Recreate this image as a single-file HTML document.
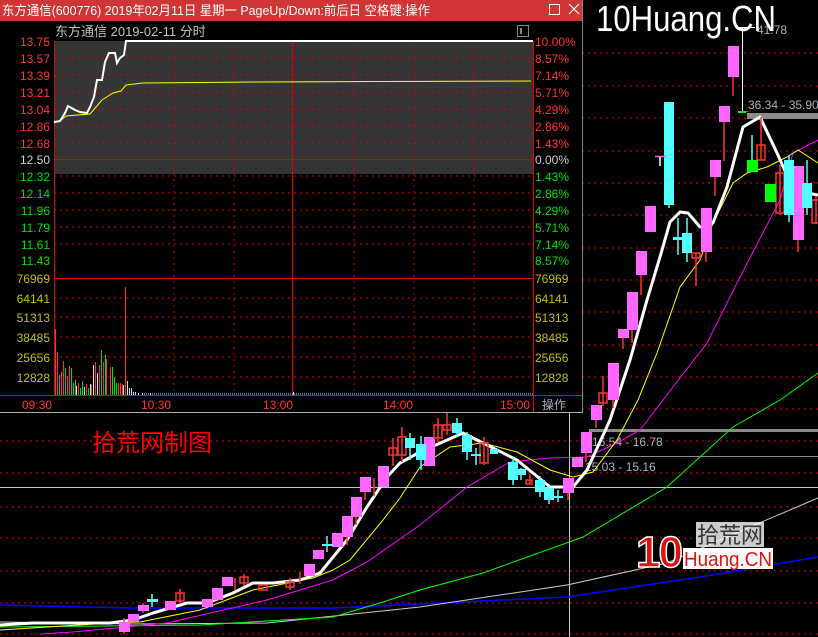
<!DOCTYPE html>
<html><head><meta charset="utf-8"><style>
html,body{margin:0;padding:0;background:#000;width:818px;height:637px;overflow:hidden}
svg{display:block}
text{font-family:"Liberation Sans","Noto Sans CJK SC",sans-serif}
</style></head><body>
<svg width="818" height="637" viewBox="0 0 818 637" xmlns="http://www.w3.org/2000/svg">
<rect width="818" height="637" fill="#000"/>
<g stroke="#e00000" stroke-width="1" stroke-dasharray="2,4">
<line x1="0" y1="53" x2="818" y2="53"/><line x1="0" y1="86" x2="818" y2="86"/><line x1="0" y1="118" x2="818" y2="118"/><line x1="0" y1="151" x2="818" y2="151"/><line x1="0" y1="183" x2="818" y2="183"/><line x1="0" y1="215" x2="818" y2="215"/><line x1="0" y1="248" x2="818" y2="248"/><line x1="0" y1="280" x2="818" y2="280"/><line x1="0" y1="312" x2="818" y2="312"/><line x1="0" y1="345" x2="818" y2="345"/><line x1="0" y1="377" x2="818" y2="377"/><line x1="0" y1="409" x2="818" y2="409"/><line x1="0" y1="441" x2="818" y2="441"/><line x1="0" y1="473" x2="818" y2="473"/><line x1="0" y1="507" x2="818" y2="507"/><line x1="0" y1="538" x2="818" y2="538"/><line x1="0" y1="571" x2="818" y2="571"/><line x1="0" y1="603" x2="818" y2="603"/><line x1="0" y1="634" x2="818" y2="634"/>
</g>
<line x1="0" y1="487.5" x2="818" y2="487.5" stroke="#c8c8c8"/>
<line x1="569.5" y1="413" x2="569.5" y2="637" stroke="#c8c8c8"/>
<rect x="747" y="113" width="71" height="6" fill="#8a8a8a"/>
<rect x="589" y="429" width="229" height="3" fill="#8a8a8a"/>
<line x1="589" y1="456.5" x2="818" y2="456.5" stroke="#8a8a8a"/>
<line x1="742.5" y1="27" x2="742.5" y2="111" stroke="#fff"/>
<line x1="738" y1="27.5" x2="755" y2="27.5" stroke="#fff"/>
<line x1="738" y1="111.5" x2="748" y2="111.5" stroke="#0c0"/>
<text x="757" y="34" font-size="12" fill="#a9b3c0">41.78</text>
<text x="748" y="109" font-size="12" fill="#a9b3c0">36.34 - 35.90</text>
<text x="592" y="446" font-size="12" fill="#a9b3c0">16.54 - 16.78</text>
<text x="585" y="471" font-size="12" fill="#a9b3c0">15.03 - 15.16</text>
<g fill="none">
<polyline stroke="#0000ff" stroke-width="1.5" points="0,605 83,607 133,608 333,608 420,604 567,597 700,577 818,557"/>
<polyline stroke="#cfcfcf" stroke-width="1" points="0,622 133,624 267,623 420,607 567,585 667,563 750,527 818,498"/>
<polyline stroke="#00ff00" stroke-width="1" points="0,627 200,625 333,617 383,602 420,590 483,573 583,537 667,487 733,427 780,400 818,373"/>
<polyline stroke="#ff00ff" stroke-width="1" points="40,634 73,632 167,623 267,600 333,580 367,562 420,525 467,487 510,462 550,458 587,457 617,443 640,430 663,400 707,343 740,277 780,200 793,153 818,140"/>
<polyline stroke="#ffff00" stroke-width="1" points="0,630 110,623 140,622 200,610 253,590 313,578 333,570 350,560 383,520 400,498 420,467 450,447 483,443 517,452 550,470 573,477 593,472 617,440 638,400 657,353 680,287 700,260 713,223 733,183 747,173 767,167 787,157 798,150 818,163"/>
<polyline stroke="#fff" stroke-width="3" stroke-linejoin="round" points="0,625 33,623 110,623 133,620 153,613 187,603 207,603 233,593 253,583 273,583 300,580 320,573 347,540 367,507 387,477 400,463 420,452 463,433 483,443 517,460 550,487 573,487 587,470 610,420 630,360 647,300 660,257 670,222 680,212 688,213 700,227 713,223 727,187 743,127 760,117 777,153 790,182 807,193 818,195"/>
</g>
<g stroke-width="1.5">
<g stroke="#ff3232"><line x1="124" y1="618" x2="124" y2="634"/><line x1="143" y1="603" x2="143" y2="613"/><line x1="347" y1="537" x2="347" y2="545"/><line x1="356" y1="517" x2="356" y2="525"/><line x1="365" y1="492" x2="365" y2="500"/><line x1="374" y1="478" x2="374" y2="496"/><line x1="393" y1="438" x2="393" y2="466"/><line x1="402" y1="427" x2="402" y2="462"/><line x1="438" y1="418" x2="438" y2="442"/><line x1="447" y1="413" x2="447" y2="435"/><line x1="484" y1="437" x2="484" y2="465"/><line x1="530" y1="474" x2="530" y2="484"/><line x1="568" y1="478" x2="568" y2="500"/><line x1="586" y1="453" x2="586" y2="462"/><line x1="596" y1="420" x2="596" y2="428"/><line x1="603" y1="376" x2="603" y2="406"/><line x1="613" y1="400" x2="613" y2="408"/><line x1="623" y1="338" x2="623" y2="349"/><line x1="632" y1="330" x2="632" y2="343"/><line x1="641" y1="275" x2="641" y2="295"/><line x1="696" y1="253" x2="696" y2="286"/><line x1="706" y1="252" x2="706" y2="262"/><line x1="715" y1="177" x2="715" y2="196"/><line x1="724" y1="122" x2="724" y2="161"/><line x1="733" y1="77" x2="733" y2="96"/><line x1="761" y1="117" x2="761" y2="160"/><line x1="780" y1="165" x2="780" y2="215"/><line x1="798" y1="240" x2="798" y2="252"/><line x1="816" y1="196" x2="816" y2="224"/><line x1="180" y1="589" x2="180" y2="604"/><line x1="244" y1="574" x2="244" y2="586"/><line x1="290" y1="578" x2="290" y2="590"/><line x1="300" y1="572" x2="300" y2="584"/><line x1="235" y1="578" x2="235" y2="590"/></g>
<g fill="#ff66ff"><rect x="119" y="622" width="11" height="10"/><rect x="128" y="614" width="11" height="8"/><rect x="138" y="605" width="11" height="6"/><rect x="165" y="601" width="11" height="9"/><rect x="202" y="599" width="11" height="8"/><rect x="212" y="588" width="11" height="12"/><rect x="222" y="577" width="11" height="9"/><rect x="304" y="564" width="11" height="12"/><rect x="313" y="550" width="11" height="9"/><rect x="332" y="533" width="11" height="14"/><rect x="342" y="516" width="11" height="21"/><rect x="351" y="497" width="11" height="20"/><rect x="360" y="477" width="11" height="15"/><rect x="378" y="466" width="11" height="21"/><rect x="424" y="437" width="11" height="29"/><rect x="563" y="478" width="11" height="15"/><rect x="572" y="457" width="11" height="10"/><rect x="581" y="432" width="11" height="21"/><rect x="591" y="405" width="11" height="15"/><rect x="608" y="363" width="11" height="37"/><rect x="618" y="329" width="11" height="9"/><rect x="627" y="292" width="11" height="38"/><rect x="636" y="251" width="11" height="24"/><rect x="645" y="206" width="11" height="26"/><rect x="701" y="208" width="11" height="44"/><rect x="710" y="160" width="11" height="17"/><rect x="719" y="106" width="11" height="16"/><rect x="728" y="46" width="11" height="31"/><rect x="793" y="166" width="11" height="74"/></g>
<g fill="none" stroke="#ff3232"><rect x="176" y="593" width="8" height="8"/><rect x="240" y="577" width="8" height="6"/><rect x="259" y="585" width="8" height="5"/><rect x="286" y="582" width="8" height="5"/><rect x="389" y="448" width="8" height="7"/><rect x="398" y="437" width="8" height="18"/><rect x="434" y="425" width="8" height="13"/><rect x="443" y="425" width="8" height="5"/><rect x="480" y="443" width="8" height="20"/><rect x="599" y="393" width="8" height="10"/><rect x="692" y="253" width="8" height="5"/><rect x="757" y="145" width="8" height="15"/><rect x="776" y="173" width="8" height="40"/><rect x="812" y="200" width="8" height="23"/><rect x="526" y="480" width="6" height="4"/></g>
<g stroke="#54ffff"><line x1="152" y1="594" x2="152" y2="607"/><line x1="327" y1="536" x2="327" y2="552"/><line x1="410" y1="433" x2="410" y2="460"/><line x1="421" y1="436" x2="421" y2="470"/><line x1="457" y1="418" x2="457" y2="437"/><line x1="467" y1="432" x2="467" y2="460"/><line x1="476" y1="448" x2="476" y2="465"/><line x1="513" y1="458" x2="513" y2="485"/><line x1="521" y1="468" x2="521" y2="480"/><line x1="540" y1="476" x2="540" y2="497"/><line x1="549" y1="486" x2="549" y2="504"/><line x1="558" y1="490" x2="558" y2="502"/><line x1="669" y1="102" x2="669" y2="208"/><line x1="678" y1="218" x2="678" y2="255"/><line x1="687" y1="218" x2="687" y2="262"/><line x1="752" y1="135" x2="752" y2="160"/><line x1="789" y1="155" x2="789" y2="222"/><line x1="807" y1="160" x2="807" y2="215"/></g>
<g fill="#54ffff"><rect x="147" y="599" width="11" height="3"/><rect x="322" y="544" width="11" height="2"/><rect x="405" y="438" width="10" height="10"/><rect x="416" y="444" width="10" height="16"/><rect x="452" y="423" width="10" height="10"/><rect x="462" y="435" width="10" height="17"/><rect x="471" y="454" width="10" height="2"/><rect x="490" y="449" width="8" height="5"/><rect x="508" y="462" width="10" height="18"/><rect x="516" y="469" width="10" height="6"/><rect x="535" y="480" width="10" height="12"/><rect x="544" y="488" width="10" height="12"/><rect x="553" y="496" width="10" height="2"/><rect x="664" y="102" width="10" height="103"/><rect x="673" y="237" width="10" height="3"/><rect x="682" y="233" width="10" height="20"/><rect x="784" y="160" width="10" height="55"/><rect x="802" y="183" width="10" height="25"/></g>
<g fill="#00ff00"><rect x="747" y="160" width="11" height="12"/><rect x="765" y="184" width="11" height="18"/><rect x="738" y="111" width="8" height="2"/></g>
<line x1="655" y1="156.5" x2="666" y2="156.5" stroke="#ff66ff"/><line x1="660" y1="157" x2="660" y2="166" stroke="#fff"/>
</g>
<text x="92" y="451" font-size="24" fill="#ff0000">拾荒网制图</text>
<text x="596" y="31" font-size="36" fill="#fff" textLength="180" lengthAdjust="spacingAndGlyphs">10Huang.CN</text>
<rect x="696" y="522" width="68" height="25" fill="#fff" opacity="0.8"/>
<rect x="683" y="548" width="90" height="21" fill="#fff"/>
<text x="636" y="567" font-size="44" font-weight="bold" fill="#e01010" stroke="#fff" stroke-width="1.5" letter-spacing="-2">10</text>
<text x="697" y="543" font-size="22" fill="#333">拾荒网</text>
<text x="684" y="566" font-size="20" fill="#e01010" textLength="88" lengthAdjust="spacingAndGlyphs">Huang.CN</text>
<rect x="0" y="0" width="583" height="413" fill="#000"/>
<rect x="0" y="0" width="583" height="21" fill="#d03535"/>
<text x="2" y="15" font-size="13" fill="#fff" textLength="428" lengthAdjust="spacingAndGlyphs">东方通信(600776) 2019年02月11日 星期一 PageUp/Down:前后日 空格键:操作</text>
<rect x="549.5" y="4.5" width="10" height="10" fill="none" stroke="#fff"/>
<path d="M569 4 L579 14 M579 4 L569 14" stroke="#fff" stroke-width="1.2"/>
<text x="55" y="36" font-size="13" fill="#c0c0c0">东方通信  2019-02-11 分时</text>
<rect x="517.5" y="25.5" width="11" height="11" fill="none" stroke="#888"/><rect x="520" y="28" width="2" height="6" fill="#888"/>
<line x1="582.5" y1="0" x2="582.5" y2="413" stroke="#888"/>
<line x1="0" y1="412.5" x2="583" y2="412.5" stroke="#aaa"/>
<rect x="54" y="41" width="479" height="133" fill="#353535"/>
<g stroke="#e00000" stroke-dasharray="2,4">
<line x1="54" y1="58" x2="533" y2="58"/><line x1="54" y1="75" x2="533" y2="75"/><line x1="54" y1="92" x2="533" y2="92"/><line x1="54" y1="109" x2="533" y2="109"/><line x1="54" y1="126" x2="533" y2="126"/><line x1="54" y1="143" x2="533" y2="143"/><line x1="54" y1="176" x2="533" y2="176"/><line x1="54" y1="193" x2="533" y2="193"/><line x1="54" y1="210" x2="533" y2="210"/><line x1="54" y1="227" x2="533" y2="227"/><line x1="54" y1="244" x2="533" y2="244"/><line x1="54" y1="298" x2="533" y2="298"/><line x1="54" y1="317" x2="533" y2="317"/><line x1="54" y1="337" x2="533" y2="337"/><line x1="54" y1="357" x2="533" y2="357"/><line x1="54" y1="377" x2="533" y2="377"/>
<line x1="174" y1="41" x2="174" y2="395"/><line x1="234" y1="41" x2="234" y2="395"/><line x1="354" y1="41" x2="354" y2="395"/><line x1="414" y1="41" x2="414" y2="395"/><line x1="474" y1="41" x2="474" y2="395"/>
</g>
<g stroke="#e00000" fill="none">
<line x1="54.5" y1="41" x2="54.5" y2="395"/><line x1="533.5" y1="41" x2="533.5" y2="412"/><line x1="292.5" y1="41" x2="292.5" y2="395"/>
<line x1="54" y1="159.5" x2="533" y2="159.5"/><line x1="54" y1="278.5" x2="533" y2="278.5"/><line x1="0" y1="395.5" x2="583" y2="395.5"/>
</g>
<polyline fill="none" stroke="#ffff00" stroke-width="1" points="54,123 60,121 66,116 90,114 102,100 113,93 121,91 126,85 143,83 256,82 531,81"/>
<polyline fill="none" stroke="#fff" stroke-width="2" points="54,122 60,121 65,113 68,106 75,110 80,112 87,113 90,107 94,97 97,80 102,80 105,62 109,53 115,53 117,63 120,58 124,55 126,41 533,41"/>
<g stroke-width="1">
<g stroke="#ff3232"><line x1="55.5" y1="329" x2="55.5" y2="395"/><line x1="57.5" y1="352" x2="57.5" y2="395"/><line x1="61.5" y1="372" x2="61.5" y2="395"/><line x1="63.5" y1="361" x2="63.5" y2="395"/><line x1="67.5" y1="376" x2="67.5" y2="395"/><line x1="69.5" y1="366" x2="69.5" y2="395"/><line x1="78.5" y1="383" x2="78.5" y2="395"/><line x1="86.5" y1="384" x2="86.5" y2="395"/><line x1="91.5" y1="385" x2="91.5" y2="395"/><line x1="95.5" y1="362" x2="95.5" y2="395"/><line x1="99.5" y1="365" x2="99.5" y2="395"/><line x1="103.5" y1="362" x2="103.5" y2="395"/><line x1="106.5" y1="359" x2="106.5" y2="395"/><line x1="110.5" y1="367" x2="110.5" y2="395"/><line x1="118.5" y1="383" x2="118.5" y2="395"/><line x1="120.5" y1="383" x2="120.5" y2="395"/><line x1="122.5" y1="384" x2="122.5" y2="395"/><line x1="125.5" y1="287" x2="125.5" y2="395"/></g>
<g stroke="#00e000"><line x1="59.5" y1="375" x2="59.5" y2="395"/><line x1="65.5" y1="368" x2="65.5" y2="395"/><line x1="71.5" y1="368" x2="71.5" y2="395"/><line x1="73.5" y1="383" x2="73.5" y2="395"/><line x1="75.5" y1="380" x2="75.5" y2="395"/><line x1="80.5" y1="388" x2="80.5" y2="395"/><line x1="82.5" y1="381" x2="82.5" y2="395"/><line x1="88.5" y1="388" x2="88.5" y2="395"/><line x1="101.5" y1="350" x2="101.5" y2="395"/><line x1="105.5" y1="355" x2="105.5" y2="395"/><line x1="112.5" y1="367" x2="112.5" y2="395"/><line x1="114.5" y1="377" x2="114.5" y2="395"/><line x1="116.5" y1="383" x2="116.5" y2="395"/></g>
<g stroke="#ddd"><line x1="76.5" y1="386" x2="76.5" y2="395"/><line x1="84.5" y1="387" x2="84.5" y2="395"/><line x1="90.5" y1="384" x2="90.5" y2="395"/><line x1="93.5" y1="365" x2="93.5" y2="395"/><line x1="97.5" y1="373" x2="97.5" y2="395"/><line x1="123.5" y1="385" x2="123.5" y2="395"/><line x1="127.5" y1="381" x2="127.5" y2="395"/><line x1="129.5" y1="388" x2="129.5" y2="395"/><line x1="131.5" y1="388" x2="131.5" y2="395"/><line x1="133.5" y1="392" x2="133.5" y2="395"/><line x1="135.5" y1="392" x2="135.5" y2="395"/><line x1="138.5" y1="393" x2="138.5" y2="395"/><line x1="142.5" y1="393" x2="142.5" y2="395"/><line x1="150.5" y1="393" x2="150.5" y2="395"/><line x1="293.5" y1="392" x2="293.5" y2="395"/></g>
<line x1="144" y1="394" x2="533" y2="394" stroke="#ddd" stroke-dasharray="1,1"/>
</g>
<g font-size="12" text-anchor="end">
<g fill="#ff3232"><text x="50" y="46">13.75</text><text x="50" y="63">13.57</text><text x="50" y="80">13.39</text><text x="50" y="97">13.21</text><text x="50" y="114">13.04</text><text x="50" y="131">12.86</text><text x="50" y="148">12.68</text></g>
<text x="50" y="164" fill="#d0d0d0">12.50</text>
<g fill="#00e000"><text x="50" y="181">12.32</text><text x="50" y="198">12.14</text><text x="50" y="215">11.96</text><text x="50" y="232">11.79</text><text x="50" y="249">11.61</text><text x="50" y="265">11.43</text></g>
<g fill="#c0c000"><text x="50" y="283">76969</text><text x="50" y="303">64141</text><text x="50" y="322">51313</text><text x="50" y="342">38485</text><text x="50" y="362">25656</text><text x="50" y="382">12828</text></g>
</g>
<g font-size="12">
<g fill="#ff3232"><text x="535" y="46">10.00%</text><text x="535" y="63">8.57%</text><text x="535" y="80">7.14%</text><text x="535" y="97">5.71%</text><text x="535" y="114">4.29%</text><text x="535" y="131">2.86%</text><text x="535" y="148">1.43%</text></g>
<text x="535" y="164" fill="#d0d0d0">0.00%</text>
<g fill="#00e000"><text x="535" y="181">1.43%</text><text x="535" y="198">2.86%</text><text x="535" y="215">4.29%</text><text x="535" y="232">5.71%</text><text x="535" y="249">7.14%</text><text x="535" y="265">8.57%</text></g>
<g fill="#c0c000"><text x="535" y="283">76969</text><text x="535" y="303">64141</text><text x="535" y="322">51313</text><text x="535" y="342">38485</text><text x="535" y="362">25656</text><text x="535" y="382">12828</text></g>
<g fill="#ff3232"><text x="22" y="409">09:30</text><text x="141" y="409">10:30</text><text x="263" y="409">13:00</text><text x="383" y="409">14:00</text><text x="500" y="409">15:00</text></g>
<text x="542" y="409" fill="#a9b3c0">操作</text>
</g>
</svg>
</body></html>
